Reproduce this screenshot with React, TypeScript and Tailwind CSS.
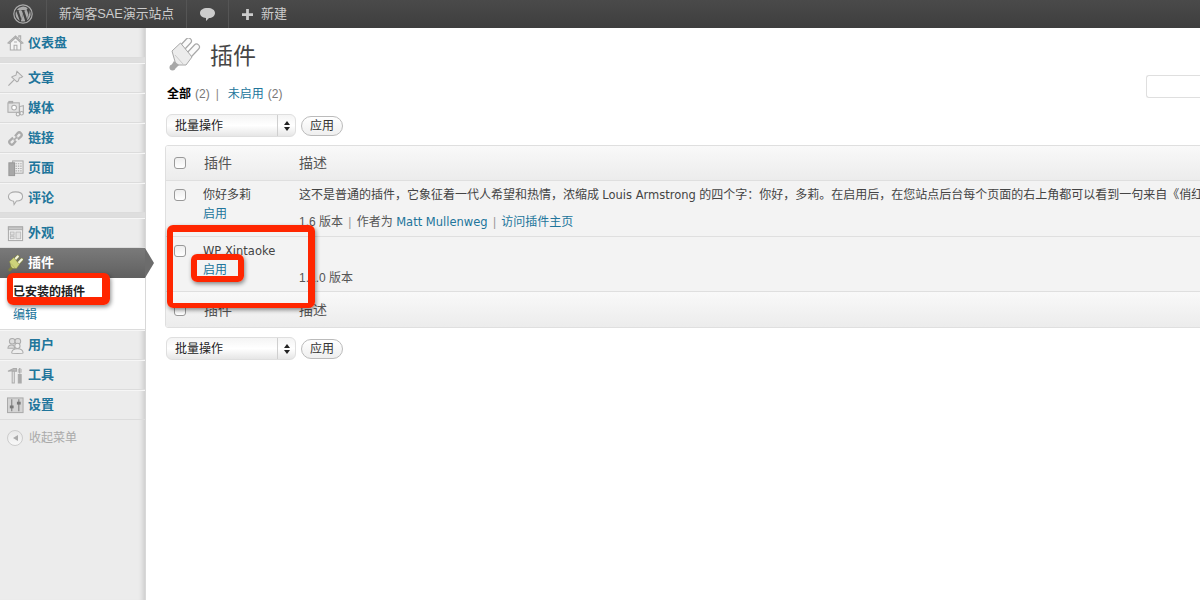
import React from "react";

const bodyFont = "font-['Liberation_Sans','Noto_Sans_CJK_SC',sans-serif]";
// closest thing to the Lucida look of the latin words in the picture
const latin = "font-['DejaVu_Sans',sans-serif] text-[11.500px]";

function WpLogo() {
  return (
    <svg width="20" height="20" viewBox="0 0 20 20">
      <circle cx="10" cy="10" r="9.2" fill="none" stroke="#aaa" strokeWidth="1.2" />
      <path d="M2.600 10c0 3 1.700 5.500 4.200 6.700L3.200 7a7.400 7.400 0 0 0-.6 3zm12.400-.4c0-.9-.3-1.600-.6-2.100-.4-.6-.7-1.100-.7-1.700 0-.7.500-1.300 1.200-1.300h.1A7.400 7.400 0 0 0 3.800 6h.5c.8 0 2-.1 2-.1.400 0 .5.600.1.600 0 0-.4 0-.9.100l2.800 8.400 1.700-5.100-1.200-3.300-.8-.1c-.4 0-.4-.6 0-.6 0 0 1.300.1 2 .1.800 0 2-.1 2-.1.400 0 .5.600.1.600 0 0-.4 0-.9.100l2.800 8.300.8-2.600c.3-1 .6-1.800.6-2.400zm-4.900 1-2.300 6.700a7.400 7.400 0 0 0 4.500-.1l-.1-.1zm6.500-4.300.1.800c0 .8-.1 1.600-.6 2.800l-2.300 6.600a7.400 7.400 0 0 0 2.800-10.200z" fill="#aaa" />
    </svg>
  );
}

function PlugIcon({ size, light }: { size: number; light?: boolean }) {
  const body = light ? "#cdd27a" : "#ececec";
  const prong = light ? "#f3f3e0" : "#fafafa";
  const line = light ? "#7f8240" : "#a8a8a8";
  return (
    <svg width={size} height={size} viewBox="0 0 34 34">
      <path d="M14 11l7.500-8M22 17l7.500-8" stroke={line} strokeWidth="7" strokeLinecap="round" fill="none" />
      <path d="M14 11l7.500-8M22 17l7.500-8" stroke={prong} strokeWidth="4.600" strokeLinecap="round" fill="none" />
      <path d="M5 13l8.500-8 11.500 14-6 8-10 0z" fill={body} stroke={line} strokeWidth="1" />
      <path d="M8 17l8 9" stroke={line} strokeWidth="1" opacity="0.5" />
      <path d="M7 23l5 4-3.500 3.500-4-3.500z" fill={line} />
      <circle cx="5.500" cy="29.500" r="3" fill={line} />
    </svg>
  );
}

function MenuIcon({ name }: { name: string }) {
  const c = "#ababab";
  return (
    <svg width="17" height="17" viewBox="0 0 18 18" fill="none" stroke={c} strokeWidth="1.100">
      {name === "home" && (
        <>
          <path d="M1 9.500L9 2l8 7.500-1.500.5L9 4 2.500 10z" fill="#cfcfcf" />
          <path d="M3.500 9v8h11V9L9 4z" fill="#f4f4f4" />
          <path d="M7.500 17v-5h3v5M7.500 8.500h3" />
          <path d="M12.500 4V2h2v4" fill="#ddd" />
        </>
      )}
      {name === "pin" && (
        <>
          <path d="M10.500 1.500l6 5.500-1.500 1-2 .5-1 3-1.500 1L5 7.500l1.500-1 3-1 .5-2z" fill="#e6e6e6" />
          <path d="M7.500 10.500L1.500 16.500" strokeWidth="1.300" />
        </>
      )}
      {name === "media" && (
        <>
          <rect x="1" y="3" width="12" height="10" fill="#e2e2e2" />
          <rect x="2" y="1.500" width="4" height="1.500" fill="#bbb" />
          <circle cx="7.500" cy="8" r="2.500" fill="#fff" />
          <circle cx="11.500" cy="15" r="1.800" fill="#f2f2f2" />
          <circle cx="15.500" cy="14" r="1.800" fill="#f2f2f2" />
          <path d="M13.300 15V7l4-1v8" fill="none" />
        </>
      )}
      {name === "link" && (
        <>
          <path d="M8.500 6.500l3-3.500c2-1.800 5.500 1.500 3.500 3.800L11.500 10" strokeWidth="2.400" />
          <path d="M9.500 11.500l-3 3.500c-2 1.800-5.500-1.500-3.500-3.800L6.500 8" strokeWidth="2.400" />
          <path d="M7 11l4-4" strokeWidth="1.600" />
        </>
      )}
      {name === "page" && (
        <>
          <rect x="6" y="1" width="11" height="13" fill="#ececec" />
          <rect x="2" y="3" width="6" height="13.500" fill="#a8a8a8" stroke="#999" />
          <path d="M9 4h6.500M9 6.500h6.500M9 9h6.500M9 11.500h6.500" strokeDasharray="1.500 1" />
        </>
      )}
      {name === "comment" && (
        <path d="M9 2c4.500 0 7.500 1.900 7.500 4.800S13.500 11.500 10 11.700l-2.500 3.800-.5-3.700C3.500 11.300 1.500 9.400 1.500 6.800 1.500 3.900 4.500 2 9 2z" fill="#f2f2f2" />
      )}
      {name === "look" && (
        <>
          <rect x="1.500" y="2" width="15" height="14.500" fill="#f7f7f7" stroke="#aaa" />
          <rect x="1.500" y="2" width="15" height="3" fill="#c8c8c8" stroke="#aaa" />
          <path d="M3.500 7.500h4v3h-4zM3.500 12h4v2.500h-4zM9.500 7.500h5v7h-5z" fill="#e2e2e2" stroke="#bbb" />
        </>
      )}
      {name === "users" && (
        <>
          <circle cx="5.500" cy="4.500" r="3" fill="#ddd" />
          <circle cx="11.500" cy="4.500" r="3" fill="#ddd" />
          <path d="M1 12c0-2.500 2-3.500 4-3.500s3 1 3 3.500z" fill="#ddd" />
          <circle cx="11" cy="9.500" r="2.800" fill="#eee" />
          <path d="M5 17c0-3.500 3-4.500 6-4.500s6 1 6 4.500c0 .5-12 .5-12 0z" fill="#eee" />
        </>
      )}
      {name === "tools" && (
        <>
          <path d="M1 4.500l6-3h3v3H7.500L6 4z" fill="#bbb" />
          <path d="M5.500 4.500h2.200V17H5.500z" fill="#ececec" />
          <path d="M13.500 1v6" strokeWidth="1.500" />
          <path d="M12 8h3v9h-3z" fill="#aaa" />
          <path d="M12 2v4M15 2v4" strokeWidth="0.800" />
        </>
      )}
      {name === "settings" && (
        <>
          <rect x="0.500" y="1" width="16.500" height="15.500" fill="#d4d4d4" stroke="#aaa" />
          <path d="M5 2.500v12.500M12.500 2.500v12.500" stroke="#888" strokeWidth="1.300" />
          <rect x="3" y="9" width="4" height="3" fill="#777" stroke="none" />
          <rect x="10.500" y="5" width="4" height="3" fill="#777" stroke="none" />
        </>
      )}
    </svg>
  );
}

function MenuItem({ icon, label }: { icon: string; label: string }) {
  return (
    <div className="flex h-[30px] items-center border-y border-t-[#f6f6f6] border-b-[#dcdcdc] pl-[7px]">
      <span className="flex w-[21px] shrink-0">
        <MenuIcon name={icon} />
      </span>
      <span className="text-[13px] font-bold text-[#21759b]">{label}</span>
    </div>
  );
}

function Separator() {
  return <div className="h-[5px] border-b border-[#dcdcdc] bg-[#dedede]" />;
}

function BulkSelect() {
  return (
    <div className="ml-px flex h-[23px] w-[130px] items-center rounded-[6px] border border-[#dfdfdf] bg-gradient-to-b from-[#f4f4f4] via-white to-[#e6e6e6]">
      <span className="flex-1 pl-[8px] text-[12px] text-[#222]">批量操作</span>
      <span className="flex h-full w-[18px] flex-col items-center justify-center gap-[2px] border-l border-[#cfcfcf]">
        <span className="h-0 w-0 border-x-[3px] border-b-[4px] border-x-transparent border-b-[#222]" />
        <span className="h-0 w-0 border-x-[3px] border-t-[4px] border-x-transparent border-t-[#222]" />
      </span>
    </div>
  );
}

function ApplyButton() {
  return (
    <button className="flex h-[20px] w-[42px] items-center justify-center rounded-full border border-[#bbb] bg-gradient-to-b from-white to-[#efefef] text-[12px] text-[#333]">
      应用
    </button>
  );
}

function Checkbox() {
  return <span className="block h-[12px] w-[12px] rounded-[3px] border border-[#999] bg-gradient-to-b from-[#eee] to-white" />;
}

function HeadRow({ extra }: { extra: string }) {
  return (
    <div className={`flex h-[35px] items-center bg-gradient-to-b from-[#f9f9f9] to-[#ececec] text-[14px] text-[#555] ${extra}`}>
      <span className="flex w-[37px] shrink-0 pl-[8px]">
        <Checkbox />
      </span>
      <span className="w-[96px] shrink-0 pl-px">插件</span>
      <span>描述</span>
    </div>
  );
}

function Callout({ className }: { className: string }) {
  return <div className={`absolute rounded-[6px] border-[#ff2600] shadow-[1px_2px_4px_rgba(0,0,0,0.45)] ${className}`} />;
}

export default function App() {
  return (
    <div className={`relative flex h-[600px] w-[1200px] flex-col overflow-hidden bg-white ${bodyFont}`}>
      {/* admin bar */}
      <div className="flex h-[28px] shrink-0 items-center bg-gradient-to-b from-[#4a4a4a] to-[#3e3e3e] text-[13px] text-[#ccc]">
        <div className="flex h-full w-[47px] items-center justify-center border-r border-[#555]">
          <WpLogo />
        </div>
        <div className="flex h-full w-[140px] items-center justify-center border-r border-[#555] text-[12.800px]">新淘客SAE演示站点</div>
        <div className="flex h-full w-[42px] items-center justify-center border-r border-[#555]">
          <svg width="17" height="15" viewBox="0 0 17 15">
            <path d="M8.500 1C13 1 16 3 16 6s-3 5-6 5l-3 3v-3C3.500 10.500 1 9 1 6s3-5 7.500-5z" fill="#ccc" />
          </svg>
        </div>
        <div className="flex items-center gap-[8px] pl-[13px]">
          <svg width="11" height="11" viewBox="0 0 12 12">
            <path d="M4.500 0h3v4.500H12v3H7.500V12h-3V7.500H0v-3h4.500z" fill="#ccc" />
          </svg>
          <span>新建</span>
        </div>
      </div>

      <div className="flex min-h-0 flex-1">
        {/* sidebar */}
        <div className="relative w-[146px] shrink-0 border-r border-[#d8d8d8] bg-[#ececec] shadow-[inset_-6px_0_5px_-4px_rgba(0,0,0,0.15)]">
          <div className="flex h-[30px] items-center border-b border-[#dcdcdc] pl-[7px]">
            <span className="flex w-[21px] shrink-0">
              <MenuIcon name="home" />
            </span>
            <span className="text-[13px] font-bold text-[#21759b]">仪表盘</span>
          </div>
          <Separator />
          <MenuItem icon="pin" label="文章" />
          <MenuItem icon="media" label="媒体" />
          <MenuItem icon="link" label="链接" />
          <MenuItem icon="page" label="页面" />
          <MenuItem icon="comment" label="评论" />
          <Separator />
          <MenuItem icon="look" label="外观" />

          <div className="relative flex h-[30px] items-center bg-gradient-to-b from-[#7a7a7a] to-[#606060] pl-[7px]">
            <span className="flex w-[21px] shrink-0">
              <PlugIcon size={17} light />
            </span>
            <span className="text-[13px] font-bold text-white">插件</span>
            <span className="absolute left-full top-0 h-0 w-0 border-y-[15px] border-l-[9px] border-y-transparent border-l-[#6c6c6c]" />
          </div>
          <div className="flex h-[52px] flex-col gap-[7px] border-b border-[#dcdcdc] bg-white pl-[13px] pt-[6px] text-[12px] leading-[16px]">
            <span className="font-bold text-[#222]">已安装的插件</span>
            <span className="text-[#21759b]">编辑</span>
          </div>

          <MenuItem icon="users" label="用户" />
          <MenuItem icon="tools" label="工具" />
          <MenuItem icon="settings" label="设置" />

          <div className="flex h-[36px] items-center pl-[7px]">
            <span className="mr-[6px] flex h-[16px] w-[16px] items-center justify-center rounded-full border border-[#ccc] bg-gradient-to-b from-[#e8e8e8] to-[#f8f8f8]">
              <span className="h-0 w-0 border-y-[3px] border-r-[5px] border-y-transparent border-r-[#aaa]" />
            </span>
            <span className="text-[12px] text-[#aaa]">收起菜单</span>
          </div>
        </div>

        {/* content */}
        <div className="relative min-w-0 flex-1 pl-[19px]">
          <div className="flex h-[53px] items-start gap-[9px] pl-[2px] pt-[10px]">
            <PlugIcon size={34} />
            <h1 className="mt-[2px] text-[23px] leading-[32px] text-[#464646]">插件</h1>
          </div>

          <div className="mt-[4px] flex h-[18px] items-center pl-[2px] text-[12px] text-[#777]">
            <b className="text-[#000]">全部</b>
            <span className="ml-[4px]">(2)</span>
            <span className="ml-[6px] mr-[9px] text-[#888]">|</span>
            <span className="text-[#21759b]">未启用</span>
            <span className="ml-[4px]">(2)</span>
          </div>

          <div className="mt-[11px] flex items-center gap-[5px]">
            <BulkSelect />
            <ApplyButton />
          </div>

          <div className="mt-[8px] w-[1100px] overflow-hidden rounded-[3px] border border-[#dfdfdf]">
            <HeadRow extra="border-b border-[#dfdfdf]" />
            <div className="flex h-[56px] border-b border-[#dfdfdf] bg-[#f3f3f3] text-[12px] text-[#444]">
              <span className="flex w-[37px] shrink-0 pl-[8px] pt-[8px]">
                <Checkbox />
              </span>
              <div className="w-[96px] shrink-0 pt-[6px]">
                <div className="leading-[17px]">你好多莉</div>
                <div className="mt-[2px] leading-[17px] text-[#21759b]">启用</div>
              </div>
              <div className="min-w-0 pt-[6px]">
                <div className="whitespace-nowrap leading-[17px]">
                  这不是普通的插件，它象征着一代人希望和热情，浓缩成 <span className={latin}>Louis Armstrong</span> 的四个字：你好，多莉。在启用后，在您站点后台每个页面的右上角都可以看到一句来自《俏红娘》的歌词。
                </div>
                <div className="mt-[10px] leading-[17px] text-[#555]">
                  1.6 版本 <span className="mx-[2px] text-[#999]">|</span> 作者为 <span className={`${latin} text-[#21759b]`}>Matt Mullenweg</span> <span className="mx-[2px] text-[#999]">|</span> <span className="text-[#21759b]">访问插件主页</span>
                </div>
              </div>
            </div>
            <div className="flex h-[55px] border-b border-[#dfdfdf] bg-[#f3f3f3] text-[12px] text-[#444]">
              <span className="flex w-[37px] shrink-0 pl-[8px] pt-[8px]">
                <Checkbox />
              </span>
              <div className="w-[96px] shrink-0 pt-[6px]">
                <div className={`leading-[17px] ${latin}`}>WP Xintaoke</div>
                <div className="mt-[2px] leading-[17px] text-[#21759b]">启用</div>
              </div>
              <div className="pt-[33px] leading-[17px] text-[#555]">1.1.0 版本</div>
            </div>
            <HeadRow extra="pt-[1px]" />
          </div>

          <div className="mt-[9px] flex items-center gap-[5px]">
            <BulkSelect />
            <ApplyButton />
          </div>

          <div className="absolute right-0 top-[47px] h-[23px] w-[54px] rounded-l-[3px] border border-r-0 border-[#dfdfdf] bg-white" />
        </div>
      </div>

      {/* red annotations */}
      <Callout className="left-[7px] top-[273px] h-[32px] w-[103px] border-t-[5px] border-r-[8px] border-b-[8px] border-l-[6px]" />
      <Callout className="left-[167px] top-[225px] h-[83px] w-[148px] border-t-[7px] border-r-[7px] border-b-[5px] border-l-[6px]" />
      <Callout className="left-[191px] top-[254px] h-[28px] w-[53px] border-[6px]" />
    </div>
  );
}
